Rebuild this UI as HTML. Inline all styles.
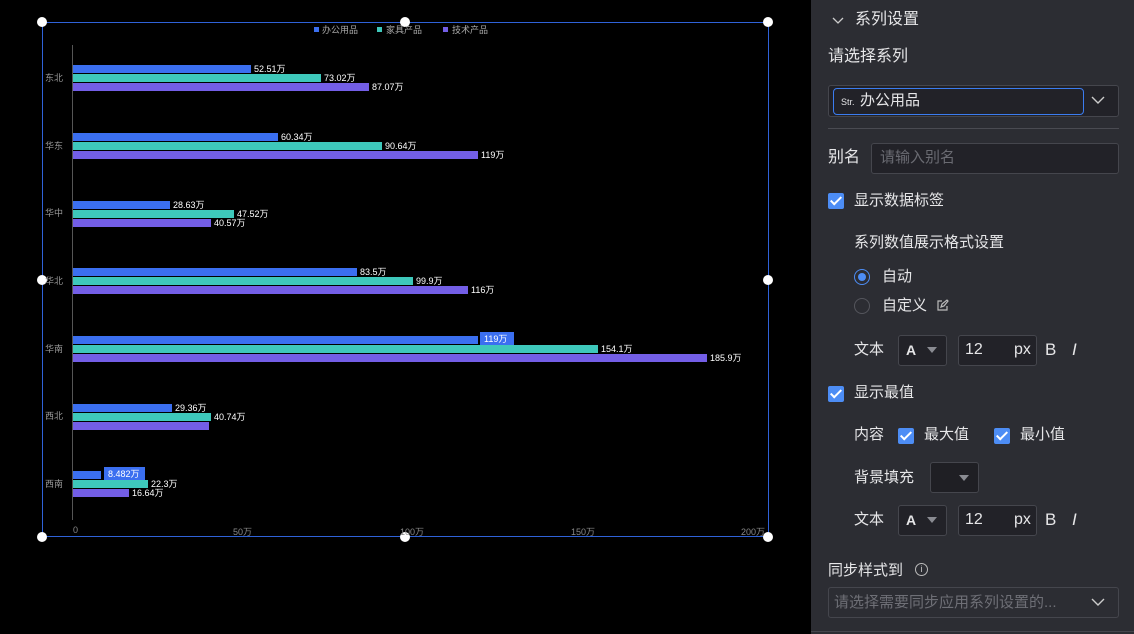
<!DOCTYPE html>
<html><head><meta charset="utf-8"><style>
*{margin:0;padding:0;box-sizing:border-box}
body{width:1134px;height:634px;background:#000;position:relative;overflow:hidden;font-family:"Liberation Sans","Noto Sans CJK SC",sans-serif}
.a{position:absolute}
.b{position:absolute;height:8px}
.c1{background:#3b6ff0}.c2{background:#3ec8bb}.c3{background:#735ee6}
.l{position:absolute;color:#fff;font-size:9px;line-height:9px;white-space:nowrap}
.y{position:absolute;color:#999;font-size:9px;left:45px;line-height:10px}
.x{position:absolute;color:#888;font-size:9px;top:525px}
.h{position:absolute;width:10px;height:10px;border-radius:50%;background:#fff}
.p{position:absolute;left:811px;top:0;width:323px;height:634px;background:#2c2d33;color:#e6e6e8;font-size:15px}
.t{position:absolute;white-space:nowrap;line-height:20px}
.inp{position:absolute;background:#222228;border:1px solid #45464d;border-radius:3px}
.cb{position:absolute;width:16px;height:16px;background:#4d8df5;border-radius:2px}
.cb:after{content:"";position:absolute;left:5px;top:1px;width:4px;height:9px;border:solid #fff;border-width:0 2px 2px 0;transform:rotate(45deg)}
.dd{position:absolute;width:0;height:0;border-left:5px solid transparent;border-right:5px solid transparent;border-top:6px solid #8a8b92}
</style></head><body>
<div class="a" style="left:42px;top:22px;width:727px;height:515px;border:1px solid #2f62d8"></div>
<div class="h" style="left:37px;top:17px"></div><div class="h" style="left:400px;top:17px"></div><div class="h" style="left:763px;top:17px"></div>
<div class="h" style="left:37px;top:275px"></div><div class="h" style="left:763px;top:275px"></div>
<div class="h" style="left:37px;top:532px"></div><div class="h" style="left:400px;top:532px"></div><div class="h" style="left:763px;top:532px"></div>
<div class="a c1" style="left:314px;top:27px;width:5px;height:5px"></div><div class="t" style="left:322px;top:20px;font-size:9px;color:#aaa">办公用品</div>
<div class="a c2" style="left:377px;top:27px;width:5px;height:5px"></div><div class="t" style="left:386px;top:20px;font-size:9px;color:#aaa">家具产品</div>
<div class="a c3" style="left:443px;top:27px;width:5px;height:5px"></div><div class="t" style="left:452px;top:20px;font-size:9px;color:#aaa">技术产品</div>
<div class="a" style="left:72px;top:45px;width:1px;height:475px;background:#555"></div>
<div class="x" style="left:73px">0</div><div class="x" style="left:233px">50万</div><div class="x" style="left:400px">100万</div><div class="x" style="left:571px">150万</div><div class="x" style="left:741px">200万</div>

<div class="y" style="top:73px">东北</div>
<div class="b c1" style="left:73px;top:65px;width:178px"></div><div class="l" style="left:254px;top:65px">52.51万</div>
<div class="b c2" style="left:73px;top:74px;width:248px"></div><div class="l" style="left:324px;top:74px">73.02万</div>
<div class="b c3" style="left:73px;top:83px;width:296px"></div><div class="l" style="left:372px;top:83px">87.07万</div>

<div class="y" style="top:141px">华东</div>
<div class="b c1" style="left:73px;top:133px;width:205px"></div><div class="l" style="left:281px;top:133px">60.34万</div>
<div class="b c2" style="left:73px;top:142px;width:309px"></div><div class="l" style="left:385px;top:142px">90.64万</div>
<div class="b c3" style="left:73px;top:151px;width:405px"></div><div class="l" style="left:481px;top:151px">119万</div>

<div class="y" style="top:208px">华中</div>
<div class="b c1" style="left:73px;top:201px;width:97px"></div><div class="l" style="left:173px;top:201px">28.63万</div>
<div class="b c2" style="left:73px;top:210px;width:161px"></div><div class="l" style="left:237px;top:210px">47.52万</div>
<div class="b c3" style="left:73px;top:219px;width:138px"></div><div class="l" style="left:214px;top:219px">40.57万</div>

<div class="y" style="top:276px">华北</div>
<div class="b c1" style="left:73px;top:268px;width:284px"></div><div class="l" style="left:360px;top:268px">83.5万</div>
<div class="b c2" style="left:73px;top:277px;width:340px"></div><div class="l" style="left:416px;top:277px">99.9万</div>
<div class="b c3" style="left:73px;top:286px;width:395px"></div><div class="l" style="left:471px;top:286px">116万</div>

<div class="y" style="top:344px">华南</div>
<div class="b c1" style="left:73px;top:336px;width:405px"></div>
<div class="a" style="left:480px;top:332px;width:34px;height:15px;background:#3b6ff0"></div><div class="l" style="left:484px;top:335px">119万</div>
<div class="b c2" style="left:73px;top:345px;width:525px"></div><div class="l" style="left:601px;top:345px">154.1万</div>
<div class="b c3" style="left:73px;top:354px;width:634px"></div><div class="l" style="left:710px;top:354px">185.9万</div>

<div class="y" style="top:411px">西北</div>
<div class="b c1" style="left:73px;top:404px;width:99px"></div><div class="l" style="left:175px;top:404px">29.36万</div>
<div class="b c2" style="left:73px;top:413px;width:138px"></div><div class="l" style="left:214px;top:413px">40.74万</div>
<div class="b c3" style="left:73px;top:422px;width:136px"></div>

<div class="y" style="top:479px">西南</div>
<div class="b c1" style="left:73px;top:471px;width:28px"></div>
<div class="a" style="left:104px;top:467px;width:41px;height:15px;background:#3b6ff0"></div><div class="l" style="left:108px;top:470px">8.482万</div>
<div class="b c2" style="left:73px;top:480px;width:75px"></div><div class="l" style="left:151px;top:480px">22.3万</div>
<div class="b c3" style="left:73px;top:489px;width:56px"></div><div class="l" style="left:132px;top:489px">16.64万</div>

<div class="p">
<svg class="a" style="left:21px;top:16px" width="12" height="10"><path d="M1 2 L6 7 L11 2" stroke="#ccc" fill="none" stroke-width="1.3"/></svg>
<div class="t" style="left:44px;top:10px;font-size:16px">系列设置</div>
<div class="t" style="left:17px;top:47px;font-size:16px">请选择系列</div>
<div class="inp" style="left:17px;top:85px;width:291px;height:32px"></div>
<div class="a" style="left:22px;top:88px;width:251px;height:27px;border:1px solid #3b7cf0;border-radius:4px"></div>
<div class="t" style="left:30px;top:92px;font-size:9px">Str.</div>
<div class="t" style="left:49px;top:91px;font-size:15px">办公用品</div>
<svg class="a" style="left:280px;top:96px" width="14" height="9"><path d="M1 1 L7 7 L13 1" stroke="#ccc" fill="none" stroke-width="1.4"/></svg>
<div class="a" style="left:17px;top:128px;width:291px;height:1px;background:#4a4b52"></div>
<div class="t" style="left:17px;top:148px;font-size:16px">别名</div>
<div class="inp" style="left:60px;top:143px;width:248px;height:31px"></div>
<div class="t" style="left:69px;top:148px;font-size:15px;color:#6a6b72">请输入别名</div>
<div class="cb" style="left:17px;top:193px"></div>
<div class="t" style="left:43px;top:191px;font-size:15px">显示数据标签</div>
<div class="t" style="left:43px;top:233px;font-size:15px">系列数值展示格式设置</div>
<div class="a" style="left:43px;top:269px;width:16px;height:16px;border-radius:50%;border:1px solid #4d8df5"><div class="a" style="left:3px;top:3px;width:8px;height:8px;border-radius:50%;background:#4d8df5"></div></div>
<div class="t" style="left:71px;top:267px;font-size:15px">自动</div>
<div class="a" style="left:43px;top:298px;width:16px;height:16px;border-radius:50%;border:1px solid #55565d"></div>
<div class="t" style="left:71px;top:296px;font-size:15px">自定义</div>
<svg class="a" style="left:125px;top:299px" width="13" height="13"><path d="M6 2H2v9h9V7 M5 8l1-3 5-4 1 1-4 5z" stroke="#bbb" fill="none" stroke-width="1.2"/></svg>

<div class="t" style="left:43px;top:340px;font-size:15px">文本</div>
<div class="inp" style="left:87px;top:335px;width:49px;height:31px"></div><div class="t" style="left:95px;top:340px;font-size:14px;font-weight:bold">A</div><div class="dd" style="left:116px;top:347px"></div>
<div class="inp" style="left:147px;top:335px;width:79px;height:31px"></div><div class="t" style="left:154px;top:340px;font-size:16px">12</div><div class="t" style="left:203px;top:340px;font-size:16px">px</div>
<div class="t" style="left:234px;top:340px;font-size:17px">B</div><div class="t" style="left:261px;top:340px;font-size:17px;font-style:italic">I</div>

<div class="cb" style="left:17px;top:386px"></div>
<div class="t" style="left:43px;top:383px;font-size:15px">显示最值</div>
<div class="t" style="left:43px;top:425px;font-size:15px">内容</div>
<div class="cb" style="left:87px;top:428px"></div><div class="t" style="left:113px;top:425px;font-size:15px">最大值</div>
<div class="cb" style="left:183px;top:428px"></div><div class="t" style="left:209px;top:425px;font-size:15px">最小值</div>
<div class="t" style="left:43px;top:468px;font-size:15px">背景填充</div>
<div class="inp" style="left:119px;top:462px;width:49px;height:31px;background:#1f1f24"></div><div class="dd" style="left:148px;top:475px"></div>

<div class="t" style="left:43px;top:510px;font-size:15px">文本</div>
<div class="inp" style="left:87px;top:505px;width:49px;height:31px"></div><div class="t" style="left:95px;top:510px;font-size:14px;font-weight:bold">A</div><div class="dd" style="left:116px;top:517px"></div>
<div class="inp" style="left:147px;top:505px;width:79px;height:31px"></div><div class="t" style="left:154px;top:510px;font-size:16px">12</div><div class="t" style="left:203px;top:510px;font-size:16px">px</div>
<div class="t" style="left:234px;top:510px;font-size:17px">B</div><div class="t" style="left:261px;top:510px;font-size:17px;font-style:italic">I</div>

<div class="t" style="left:17px;top:561px;font-size:15px">同步样式到</div>
<div class="a" style="left:104px;top:563px;width:13px;height:13px;border:1px solid #bbb;border-radius:50%;font-size:9px;text-align:center;line-height:11px;color:#ccc">i</div>
<div class="inp" style="left:17px;top:587px;width:291px;height:31px;background:#2c2d33"></div>
<div class="t" style="left:23px;top:593px;font-size:15px;color:#6e6f76">请选择需要同步应用系列设置的...</div>
<svg class="a" style="left:280px;top:598px" width="14" height="9"><path d="M1 1 L7 7 L13 1" stroke="#ccc" fill="none" stroke-width="1.4"/></svg>
<div class="a" style="left:0;top:631px;width:323px;height:1px;background:#45464d"></div>
</div>
</body></html>
